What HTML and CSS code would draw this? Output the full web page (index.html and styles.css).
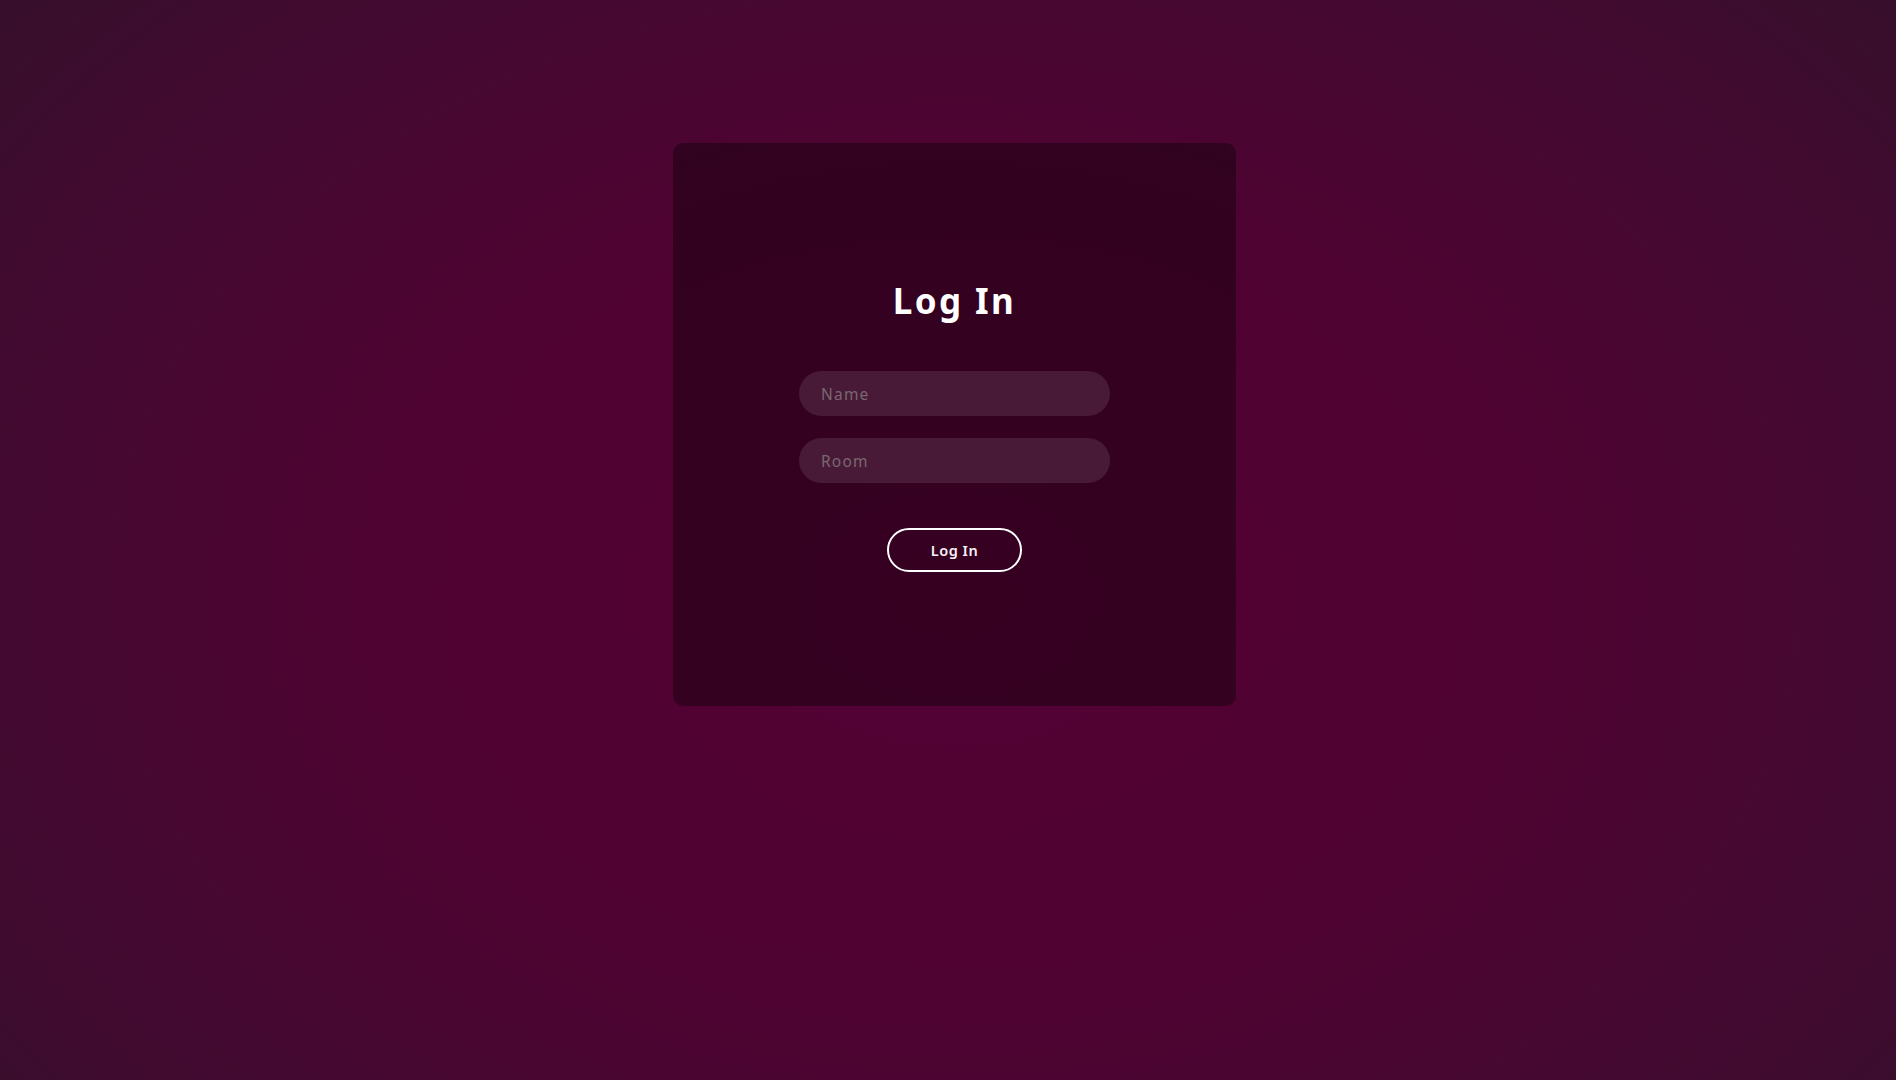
FILE: index.html
```html
<!DOCTYPE html>
<html lang="en">
<head>
<meta charset="utf-8">
<title>Log In</title>
<link rel="stylesheet" href="styles.css">
</head>
<body>
<div class="page">
  <form class="card">
    <h1 class="title">Log In</h1>
    <input class="field" type="text" placeholder="Name">
    <input class="field field-room" type="text" placeholder="Room">
    <button class="btn" type="button">Log In</button>
  </form>
</div>
</body>
</html>
```
FILE: styles.css
```css
html, body {
  margin: 0;
  padding: 0;
  height: 100%;
}
body {
  font-family: "Noto Sans", "DejaVu Sans", sans-serif;
  background: radial-gradient(ellipse 75% 95% at 50.3% 55%, #530134 0%, #4f0332 40%, #420a30 70%, #2f1229 100%);
  background-color: #3a0d2d;
}
.page {
  min-height: 100vh;
  box-sizing: border-box;
  display: flex;
  flex-direction: column;
  align-items: center;
  padding-top: 143px;
  padding-left: 13px;
}
.card {
  width: 563px;
  height: 563px;
  box-sizing: border-box;
  background: rgba(0, 0, 0, 0.35);
  border-radius: 10px;
  display: flex;
  flex-direction: column;
  align-items: center;
  padding-top: 138px;
}
.title {
  margin: 0 0 50px;
  font-size: 35px;
  line-height: 40px;
  font-weight: 700;
  color: #ffffff;
  letter-spacing: 2.4px;
}
.field {
  display: block;
  width: 311px;
  height: 45px;
  box-sizing: border-box;
  border: none;
  outline: none;
  border-radius: 23px;
  background: rgba(255, 255, 255, 0.1);
  padding: 0 22px;
  font-family: "Noto Sans", "DejaVu Sans", sans-serif;
  font-size: 15.5px;
  letter-spacing: 1.2px;
  color: #ffffff;
}
.field::placeholder {
  color: #7a6870;
}
.field-room {
  margin-top: 22px;
}
.btn {
  margin-top: 45px;
  width: 135px;
  height: 44px;
  box-sizing: border-box;
  border: 2px solid #ffffff;
  border-radius: 22px;
  background: transparent;
  color: #f7f0f4;
  font-family: "Noto Sans", "DejaVu Sans", sans-serif;
  font-size: 14.5px;
  font-weight: 600;
  letter-spacing: 0.5px;
  cursor: pointer;
}
```
